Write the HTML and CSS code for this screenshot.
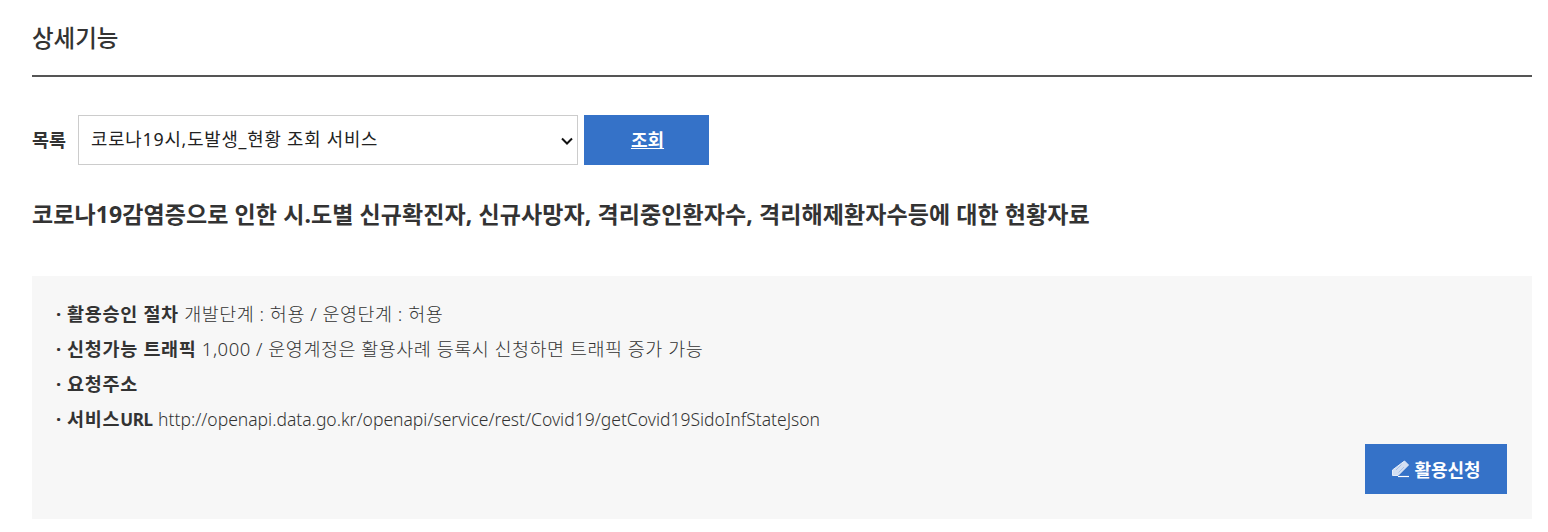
FILE: index.html
```html
<!DOCTYPE html>
<html lang="ko">
<head>
<meta charset="utf-8">
<title>상세기능</title>
<link rel="stylesheet" href="styles.css">
</head>
<body>
<main class="page">
  <h2 class="title">상세기능</h2>
  <div class="search">
    <label class="search-label" for="list">목록</label>
    <select class="search-select" id="list"><option>코로나19시,도발생_현황 조회 서비스</option></select>
    <button class="search-btn" type="button">조회</button>
  </div>
  <h3 class="desc">코로나19감염증으로 인한 시.도별 신규확진자, 신규사망자, 격리중인환자수, 격리해제환자수등에 대한 현황자료</h3>
  <section class="box">
    <ul class="info">
      <li><b>활용승인 절차</b> 개발단계 : 허용 / 운영단계 : 허용</li>
      <li><b>신청가능 트래픽</b> 1,000 / 운영계정은 활용사례 등록시 신청하면 트래픽 증가 가능</li>
      <li><b>요청주소</b></li>
      <li><b>서비스<span class="latin">URL</span></b> <span class="url">http://openapi.data.go.kr/openapi/service/rest/Covid19/getCovid19SidoInfStateJson</span></li>
    </ul>
    <div class="actions">
      <button class="apply-btn" type="button"><svg class="pencil" width="20" height="18" viewBox="0 0 20 18"><path d="M13.5 1l4 4L7 15.5H1.5V10z" fill="#d3dff2" stroke="#e6edf8" stroke-width="1"/><path d="M5 10l5.5-5.5M7.5 12.5L13 7" stroke="#9db9e4" stroke-width=".8" fill="none"/><path d="M7 16.5h11" stroke="#fff" stroke-width="1.2"/></svg>활용신청</button>
    </div>
  </section>
</main>
</body>
</html>
```
FILE: styles.css
```css
* { box-sizing: border-box; }
html, body { margin: 0; background: #fff; }
body { font-family: "Noto Sans", "Noto Sans CJK KR", sans-serif; color: #333; overflow: hidden; }
.page { padding: 0 16px 0 32px; height: 532px; }
.title { margin: 0; height: 77px; padding-top: 20px; font-size: 23.5px; line-height: 36px; font-weight: 500; border-bottom: 2px solid #555; }
.search { display: flex; align-items: center; margin-top: 38px; height: 50px; }
.search-label { font-size: 18.5px; font-weight: 700; width: 46px; padding-bottom: 3px; }
.search-select { appearance: none; width: 500px; height: 50px; font: 17.8px "Noto Sans", "Noto Sans CJK KR", sans-serif; letter-spacing: .8px; color: #222; padding: 0 30px 3px 12px; border: 1px solid #ccc; border-radius: 0; background: #fff url("data:image/svg+xml,%3Csvg xmlns='http://www.w3.org/2000/svg' width='12' height='8'%3E%3Cpath d='M1 1.5l5 5 5-5' fill='none' stroke='%23111' stroke-width='2'/%3E%3C/svg%3E") no-repeat 482px 21px; }
.search-btn { width: 125px; height: 50px; margin-left: 6px; padding: 0 0 3px 2px; background: #3572c8; color: #fff; border: 0; font: 700 18px "Noto Sans", "Noto Sans CJK KR", sans-serif; text-decoration: underline; }
.desc { margin: 31px 0 0; font-size: 23px; line-height: 36px; font-weight: 700; letter-spacing: .09px; }
.box { margin-top: 44px; background: #f7f7f7; height: 243px; padding: 20px 25px 20px 24px; }
.info { margin: 0; padding: 0; list-style: none; font-size: 18.5px; font-weight: 300; letter-spacing: .5px; }
.info li { line-height: 35px; height: 35px; white-space: nowrap; }
.info li::before { content: "·"; display: inline-block; width: 11px; font-weight: 700; }
.info b { font-weight: 700; letter-spacing: .7px; }
.latin { font-size: 17px; letter-spacing: -.3px; }
.url { font-size: 17.5px; letter-spacing: 0; }
.actions { display: flex; justify-content: flex-end; margin-top: 8px; }
.apply-btn { display: flex; align-items: center; justify-content: center; gap: 3px; width: 142px; height: 50px; background: #3572c8; color: #fff; border: 0; font: 700 18px "Noto Sans", "Noto Sans CJK KR", sans-serif; }
```
